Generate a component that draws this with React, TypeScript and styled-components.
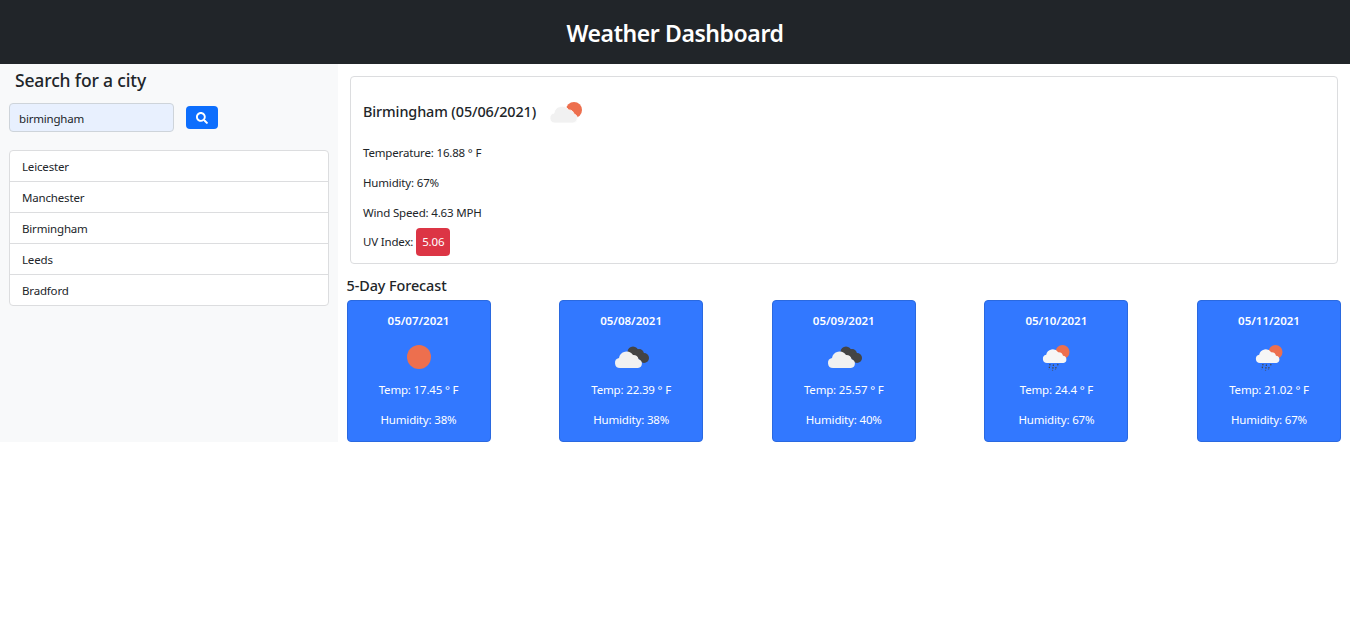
import React from "react";
import styled, { createGlobalStyle } from "styled-components";

const Global = createGlobalStyle`
  html, body { margin: 0; padding: 0; background: #fff; }
  body { font-family: "Noto Sans", "Open Sans", sans-serif; color: #212529; font-size: 11.5px; line-height: 18px; letter-spacing: -0.17px; }
  * { box-sizing: border-box; }
`;

const Header = styled.header`
  height: 64px; background: #212529; display: flex; align-items: center; justify-content: center;
`;
const Title = styled.h1`
  margin: 0; color: #fff; font-size: 23px; line-height: 28px; font-weight: 600; letter-spacing: -0.42px; padding-top: 2px;
`;
const Layout = styled.div`
  display: flex; align-items: stretch; height: 378px;
`;
const Sidebar = styled.aside`
  width: 337.5px; flex: none; background: #f8f9fa; padding: 4px 9px 0 9px;
`;
const SearchTitle = styled.h2`
  margin: 0 0 11px 6px; font-size: 17.5px; line-height: 24px; font-weight: 500; letter-spacing: -0.15px;
`;
const SearchRow = styled.form`
  display: flex; align-items: flex-start; gap: 12px; margin-bottom: 18px;
`;
const SearchInput = styled.input`
  width: 165px; height: 29px; border: 1px solid #ced4da; border-radius: 4px; background: #e8f0fe;
  padding: 2px 9px 0; font: 11.5px "Noto Sans", sans-serif; letter-spacing: -0.19px; color: #212529; outline: none;
`;
const SearchButton = styled.button`
  width: 32px; height: 23px; margin-top: 3px; border: none; border-radius: 4px; background: #0d6efd;
  display: flex; align-items: center; justify-content: center; padding: 0;
`;
const CityList = styled.ul`
  list-style: none; margin: 0; padding: 0; width: 320px; border: 1px solid #dcdddf; border-radius: 4px; background: #fff;
`;
const CityItem = styled.li`
  height: 31px; padding: 1px 12px 0; margin: 0; display: flex; align-items: center;
  border-top: 1px solid #dcdddf;
  &:first-child { height: 30px; border-top: none; }
`;
const Main = styled.main`
  flex: 1; padding: 12px 9px 0; display: flex; flex-direction: column;
`;
const Current = styled.section`
  flex: none; margin: 0 3.5px; height: 188px; border: 1px solid #dcdddf; border-radius: 4px; padding: 12px 12px 0;
  display: flex; flex-direction: column;
`;
const CurrentHead = styled.div`
  display: flex; align-items: center; gap: 11px; height: 46px; margin-bottom: 3px;
`;
const CityName = styled.h3`
  margin: 0; font-size: 14.4px; line-height: 20px; font-weight: 500; letter-spacing: -0.1px;
`;
const Stat = styled.p`
  margin: 0; height: 30px; display: flex; align-items: center; white-space: pre;
`;
const UvRow = styled(Stat)`
  margin-top: -1px;
`;
const UvBadge = styled.span`
  margin-left: 3px; background: #dc3545; color: #fff; border-radius: 4px; width: 34px; height: 28px;
  display: flex; align-items: center; justify-content: center;
`;
const ForecastTitle = styled.h4`
  margin: 12px 0 4px; font-size: 14.4px; line-height: 20px; font-weight: 500; letter-spacing: -0.08px;
`;
const Cards = styled.div`
  display: flex; justify-content: space-between;
`;
const Card = styled.article`
  width: 144px; height: 142px; background: #3278ff; border: 1px solid #2a69e0; border-radius: 4px; color: #fff;
  display: flex; flex-direction: column; align-items: center;
`;
const CardDate = styled.div`
  margin-top: 11px; height: 18px; font-weight: 600; letter-spacing: 0;
`;
const CardIcon = styled.div`
  margin-top: 9px; height: 36px; display: flex; align-items: center; justify-content: center;
`;
const CardLine = styled.div`
  height: 30px; display: flex; align-items: center; white-space: pre;
`;

const Sun = () => (
  <svg width="36" height="32" viewBox="0 0 36 32"><circle cx="18" cy="16" r="12" fill="#ed6f4e" /></svg>
);
const SunCloud = () => (
  <svg width="36" height="32" viewBox="0 0 36 32">
    <circle cx="27" cy="14" r="8" fill="#ed6f4e" />
    <path d="M8 27a5 5 0 0 1-1-9.9 8 8 0 0 1 14.6-3.2 5.5 5.5 0 0 1 5.4 4.1 4.6 4.6 0 0 1-1 9Z" fill="#f1f1f1" stroke="#fff" strokeWidth="0.8" />
  </svg>
);
const DarkCloud = () => (
  <svg width="36" height="32" viewBox="0 0 36 32">
    <circle cx="20" cy="11" r="5.5" fill="#444" /><circle cx="26" cy="13" r="5" fill="#444" /><circle cx="31" cy="17" r="5" fill="#444" />
    <path d="M7 27a5 5 0 0 1-1-9.9 7.6 7.6 0 0 1 14-3 5.5 5.5 0 0 1 5.6 4.1 4.5 4.5 0 0 1-.6 8.8Z" fill="#f1f1f1" />
  </svg>
);
const RainCloud = () => (
  <svg width="36" height="32" viewBox="0 0 36 32">
    <circle cx="24.5" cy="11" r="7" fill="#ed6f4e" />
    <path d="M9 22a4.2 4.2 0 0 1-.8-8.3 6.6 6.6 0 0 1 12-2.4 4.6 4.6 0 0 1 4.8 3.4 3.7 3.7 0 0 1 .5 7.3Z" fill="#f6f6f6" />
    <g stroke="#444" strokeWidth="1.2" strokeDasharray="1.5 1.2">
      <path d="M12 23l-1 5.5M15.5 23.5l-1 6M20 23l-.6 2.5M18 26l-.5 3" />
    </g>
  </svg>
);

const cities = ["Leicester", "Manchester", "Birmingham", "Leeds", "Bradford"];
const forecast = [
  { date: "05/07/2021", icon: <Sun />, temp: "17.45", hum: "38" },
  { date: "05/08/2021", icon: <DarkCloud />, temp: "22.39", hum: "38" },
  { date: "05/09/2021", icon: <DarkCloud />, temp: "25.57", hum: "40" },
  { date: "05/10/2021", icon: <RainCloud />, temp: "24.4", hum: "67" },
  { date: "05/11/2021", icon: <RainCloud />, temp: "21.02", hum: "67" },
];

export default function App() {
  return (
    <>
      <Global />
      <Header><Title>Weather Dashboard</Title></Header>
      <Layout>
        <Sidebar>
          <SearchTitle>Search for a city</SearchTitle>
          <SearchRow onSubmit={(e) => e.preventDefault()}>
            <SearchInput defaultValue="birmingham" />
            <SearchButton aria-label="Search">
              <svg width="12" height="12" viewBox="0 0 512 512" fill="#fff">
                <path d="M505 442.7 405.3 343c-4.5-4.5-10.6-7-17-7H372c27.6-35.3 44-79.7 44-128C416 93.1 322.9 0 208 0S0 93.1 0 208s93.1 208 208 208c48.3 0 92.7-16.4 128-44v16.3c0 6.4 2.5 12.5 7 17l99.7 99.7c9.4 9.4 24.6 9.4 33.9 0l28.3-28.3c9.4-9.4 9.4-24.6.1-34zM208 336c-70.7 0-128-57.2-128-128 0-70.7 57.2-128 128-128 70.7 0 128 57.2 128 128 0 70.7-57.2 128-128 128z" />
              </svg>
            </SearchButton>
          </SearchRow>
          <CityList>
            {cities.map((c) => <CityItem key={c}>{c}</CityItem>)}
          </CityList>
        </Sidebar>
        <Main>
          <Current>
            <CurrentHead>
              <CityName>Birmingham (05/06/2021)</CityName>
              <SunCloud />
            </CurrentHead>
            <Stat>Temperature: 16.88 ° F</Stat>
            <Stat>Humidity: 67%</Stat>
            <Stat>Wind Speed: 4.63 MPH</Stat>
            <UvRow>UV Index:<UvBadge>5.06</UvBadge></UvRow>
          </Current>
          <ForecastTitle>5-Day Forecast</ForecastTitle>
          <Cards>
            {forecast.map((f) => (
              <Card key={f.date}>
                <CardDate>{f.date}</CardDate>
                <CardIcon>{f.icon}</CardIcon>
                <CardLine>Temp: {f.temp} ° F</CardLine>
                <CardLine>Humidity: {f.hum}%</CardLine>
              </Card>
            ))}
          </Cards>
        </Main>
      </Layout>
    </>
  );
}
